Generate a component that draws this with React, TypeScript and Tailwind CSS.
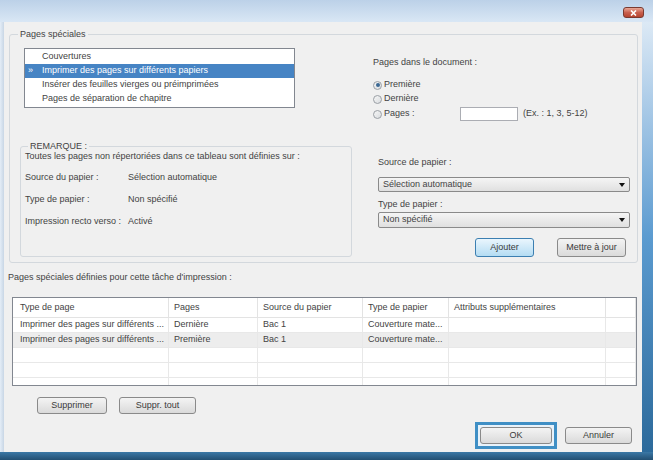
import React from 'react';

const text = 'text-[9px] text-[#434343]';

function Radio({ checked }: { checked?: boolean }) {
  return (
    <span className="flex h-[9px] w-[9px] shrink-0 items-center justify-center rounded-full border border-[#9a9fa5] bg-linear-to-br from-[#f6f6f6] to-[#d9dcdf]">
      {checked && <span className="h-[4px] w-[4px] rounded-full bg-[#3b6893]" />}
    </span>
  );
}

function Button({ label, className, primary }: { label: string; className: string; primary?: boolean }) {
  return (
    <div
      className={
        'flex items-center justify-center rounded-[3px] border ' +
        (primary
          ? 'border-[#3c7fb1] bg-linear-to-b from-[#eaf6fd] to-[#b4dcf3] '
          : 'border-[#8a8a8a] bg-linear-to-b from-[#f4f4f4] to-[#dadada] ') +
        className
      }
    >
      <span className="text-[9px] text-[#3a3a3a]">{label}</span>
    </div>
  );
}

function Select({ value, className }: { value: string; className: string }) {
  return (
    <div className={'flex w-full items-center justify-between rounded-[2px] border border-[#8a8a8a] bg-linear-to-b from-[#f5f5f5] to-[#e0e0e0] pl-[4px] pr-[4px] ' + className}>
      <span className={text}>{value}</span>
      <svg width="6" height="4" viewBox="0 0 6 4">
        <path d="M0 0 L6 0 L3 4 Z" fill="#111" />
      </svg>
    </div>
  );
}

const listItems = [
  'Couvertures',
  'Imprimer des pages sur différents papiers',
  'Insérer des feuilles vierges ou préimprimées',
  'Pages de séparation de chapitre',
];

const rows = [
  ['Imprimer des pages sur différents ...', 'Dernière', 'Bac 1', 'Couverture mate...', ''],
  ['Imprimer des pages sur différents ...', 'Première', 'Bac 1', 'Couverture mate...', ''],
  ['', '', '', '', ''],
  ['', '', '', '', ''],
  ['', '', '', '', ''],
];

const headers = ['Type de page', 'Pages', 'Source du papier', 'Type de papier', 'Attributs supplémentaires', ''];

export default function App() {
  return (
    <div className="flex h-[460px] w-[653px] flex-col bg-[#d4e3f2] font-['Liberation_Sans',Arial,sans-serif]">
      {/* Title bar */}
      <div className="flex h-[22px] shrink-0 items-start justify-end bg-linear-to-b from-[#bcd1e8] to-[#d9e7f5] pr-[9px] pt-[7px]">
        <div className="flex h-[11px] w-[21px] items-center justify-center rounded-[3px] border border-[#7a3a30] bg-linear-to-b from-[#e9a796] via-[#c9604e] to-[#b5442f]">
          <svg width="7" height="6" viewBox="0 0 7 6">
            <path d="M1 0.5 L6 5.5 M6 0.5 L1 5.5" stroke="#fff" strokeWidth="1.6" />
          </svg>
        </div>
      </div>

      <div className="flex min-h-0 flex-1">
        <div className="w-[4px] bg-linear-to-r from-[#e4edf7] to-[#c8d6e5]" />

        {/* Client area */}
        <div className="flex w-[638px] flex-col bg-[#f0f0f0]">
          {/* Pages spéciales */}
          <fieldset className="ml-[5px] mt-[6px] w-[629px] rounded-[3px] border border-[#d3d8dd] pb-[5px]">
            <legend className={'ml-[8px] px-[2px] leading-[12px] ' + text}>Pages spéciales</legend>

            <div className="mt-[8px] flex items-start">
              <div className="ml-[14px] h-[60px] w-[271px] border border-[#828790] bg-white pt-[1px]">
                {listItems.map((item, i) => {
                  const selected = i === 1;
                  return (
                    <div
                      key={item}
                      className={'flex h-[14px] items-center ' + (selected ? 'bg-[#4684c4] text-white' : 'text-[#434343]')}
                    >
                      <span className="w-[17px] pl-[3px] text-[9px]">{selected ? '»' : ''}</span>
                      <span className="text-[9px]">{item}</span>
                    </div>
                  );
                })}
              </div>

              <div className="ml-[78px] flex flex-col pt-[8px]">
                <span className={'leading-[12px] ' + text}>Pages dans le document :</span>
                <div className="mt-[10px] flex h-[14px] items-center gap-[2px]">
                  <Radio checked />
                  <span className={text}>Première</span>
                </div>
                <div className="flex h-[14px] items-center gap-[2px]">
                  <Radio />
                  <span className={text}>Dernière</span>
                </div>
                <div className="flex h-[16px] items-center">
                  <div className="flex w-[87px] items-center gap-[2px]">
                    <Radio />
                    <span className={text}>Pages :</span>
                  </div>
                  <div className="h-[14px] w-[58px] border border-[#abadb3] bg-white" />
                  <span className={'ml-[5px] ' + text}>(Ex. : 1, 3, 5-12)</span>
                </div>
              </div>
            </div>

            <div className="mt-[19px] flex items-start">
              {/* REMARQUE */}
              <fieldset className="ml-[10px] w-[332px] rounded-[3px] border border-[#d3d8dd] pb-[23px] pl-[4px]">
                <legend className={'ml-[3px] px-[2px] leading-[10px] ' + text}>REMARQUE :</legend>
                <div className={'leading-[10px] ' + text}>
                  Toutes les pages non répertoriées dans ce tableau sont définies sur :
                </div>
                <div className="mt-[6px] flex flex-col">
                  {[
                    ['Source du papier :', 'Sélection automatique'],
                    ['Type de papier :', 'Non spécifié'],
                    ['Impression recto verso :', 'Activé'],
                  ].map(([k, v]) => (
                    <div key={k} className="flex h-[22px] items-center">
                      <span className={'w-[103px] ' + text}>{k}</span>
                      <span className={text}>{v}</span>
                    </div>
                  ))}
                </div>
              </fieldset>

              <div className="ml-[26px] flex w-[252px] flex-col pt-[15px]">
                <span className={'leading-[12px] ' + text}>Source de papier :</span>
                <Select value="Sélection automatique" className="mt-[9px] h-[15px]" />
                <span className={'mt-[6px] leading-[12px] ' + text}>Type de papier :</span>
                <Select value="Non spécifié" className="mt-[2px] h-[16px]" />
                <div className="mt-[10px] flex justify-end gap-[23px] pr-[4px]">
                  <Button label="Ajouter" primary className="h-[19px] w-[59px]" />
                  <Button label="Mettre à jour" className="h-[19px] w-[69px]" />
                </div>
              </div>
            </div>
          </fieldset>

          <div className={'ml-[4px] mt-[8px] leading-[12px] ' + text}>
            Pages spéciales définies pour cette tâche d'impression :
          </div>

          {/* Table */}
          <div className="ml-[8px] mt-[14px] h-[89px] w-[625px] overflow-hidden border border-[#828790] bg-white">
            <div className="grid h-[20px] grid-cols-[156px_89px_105px_86px_157px_1fr] border-b border-[#e3e3e3]">
              {headers.map((h, i) => (
                <div
                  key={i}
                  className={'flex items-center border-r border-[#e3e3e3] ' + (i === 0 ? 'pl-[7px] ' : 'pl-[5px] ') + text}
                >
                  {h}
                </div>
              ))}
            </div>
            {rows.map((r, ri) => (
              <div
                key={ri}
                className={
                  'grid h-[15px] grid-cols-[156px_89px_105px_86px_157px_1fr] border-b border-[#e8e8e8] ' +
                  (ri === 1 ? 'bg-[#ededed]' : 'bg-white')
                }
              >
                {[...r, ''].map((c, ci) => (
                  <div
                    key={ci}
                    className={'flex items-center whitespace-nowrap border-r border-[#e8e8e8] ' + (ci === 0 ? 'pl-[7px] ' : 'pl-[5px] ') + text}
                  >
                    {c}
                  </div>
                ))}
              </div>
            ))}
          </div>

          <div className="ml-[33px] mt-[11px] flex gap-[12px]">
            <Button label="Supprimer" className="h-[17px] w-[70px]" />
            <Button label="Suppr. tout" className="h-[17px] w-[77px]" />
          </div>

          <div className="mt-[8px] flex items-center justify-end gap-[8px] pr-[10px]">
            <div className="border-[3px] border-[#3f8fc5] bg-[#e8f2fa] p-[2px]">
              <Button label="OK" className="h-[17px] w-[72px]" />
            </div>
            <Button label="Annuler" className="h-[17px] w-[67px]" />
          </div>
        </div>

        <div className="flex-1 bg-linear-to-b from-[#dce9f5] via-[#5b9bd0] to-[#2c6a9b]" />
      </div>

      <div className="h-[8px] shrink-0 bg-linear-to-b from-[#3b78a6] to-[#234f72]" />
    </div>
  );
}
